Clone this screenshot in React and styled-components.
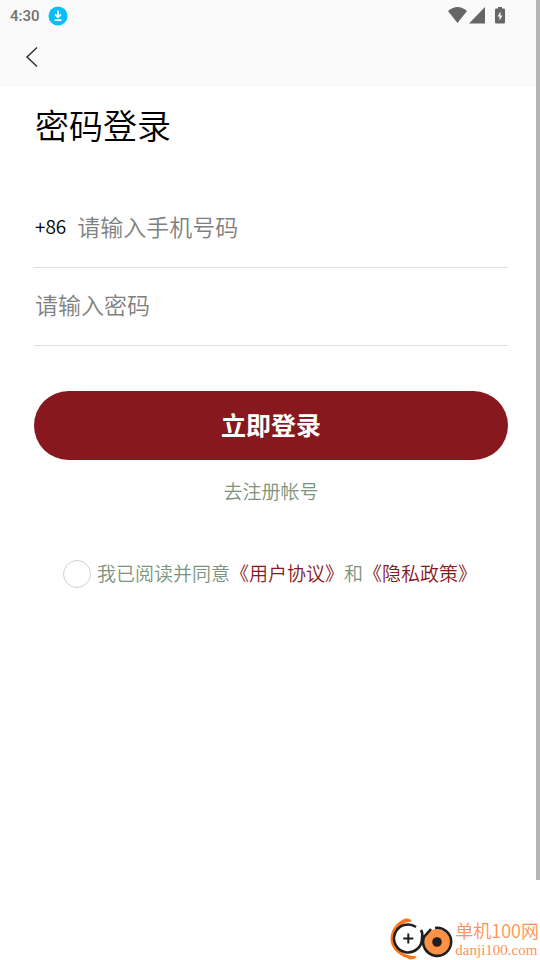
import React, { useState } from 'react';
import styled, { createGlobalStyle } from 'styled-components';

const GlobalStyle = createGlobalStyle`
  *, *::before, *::after { box-sizing: border-box; }
  body {
    margin: 0;
    background: #fff;
    font-family: "Noto Sans CJK SC", "Noto Sans", sans-serif;
    font-weight: 350;
    color: #000;
  }
`;

const Screen = styled.div`
  display: flex;
  flex-direction: column;
  min-height: 100vh;
`;

const Viewport = styled.div`
  flex: 1;
  border-right: 4px solid #b4b4b4;
`;

const Top = styled.header`
  background: #fafafa;
`;

const StatusBar = styled.div`
  display: flex;
  align-items: center;
  justify-content: space-between;
  height: 31px;
  padding: 0 31px 0 10px;
`;

const StatusGroup = styled.div`
  display: flex;
  align-items: center;
  gap: ${(p) => p.$gap}px;
`;

const Clock = styled.time`
  font: 500 15px/20px Roboto, sans-serif;
  color: #707070;
`;

const NavBar = styled.nav`
  height: 56px;
  padding: 10px 16px;
`;

const BackButton = styled.button`
  display: flex;
  align-items: center;
  justify-content: center;
  width: 32px;
  height: 32px;
  padding: 0;
  border: 0;
  background: none;
  cursor: pointer;
`;

const Form = styled.form`
  display: flex;
  flex-direction: column;
  padding: 13px 28px 0 34px;
`;

const Title = styled.h1`
  margin: 0 0 40px;
  padding-left: 1px;
  font-size: 34px;
  line-height: 50px;
  font-weight: 350;
`;

const Field = styled.label`
  display: flex;
  align-items: flex-start;
  gap: 11px;
  height: 78px;
  padding: 16px 0 0 1px;
  border-bottom: 1px solid #ddd;
`;

const Prefix = styled.span`
  font-size: 19px;
  line-height: 40px;
`;

const Input = styled.input`
  flex: 1;
  min-width: 0;
  height: 40px;
  padding: 0;
  border: 0;
  outline: 0;
  background: none;
  font: inherit;
  font-size: 23px;
  &::placeholder { color: #808080; opacity: 1; }
`;

const Submit = styled.button`
  height: 69px;
  margin-top: 45px;
  padding: 0 0 4px;
  border: 0;
  border-radius: 35px;
  background: #87181e;
  color: #fff;
  font: inherit;
  font-size: 25px;
  font-weight: 700;
  cursor: pointer;
`;

const RegisterLink = styled.a`
  align-self: center;
  margin-top: 17px;
  font-size: 19px;
  line-height: 28px;
  color: #7c937e;
  text-decoration: none;
`;

const Agreement = styled.div`
  display: flex;
  align-items: center;
  justify-content: center;
  gap: 6px;
  margin-top: 54px;
  padding-right: 2px;
  font-size: 19px;
  line-height: 28px;
  color: #7c937e;
`;

const AgreementText = styled.span`
  padding-bottom: 2px;
`;

const Check = styled.input`
  appearance: none;
  flex: none;
  width: 28px;
  height: 28px;
  margin: 0;
  border: 1px solid #d0d0d0;
  border-radius: 50%;
  background: #fff;
  &:checked { background: #87181e; }
`;

const PolicyLink = styled.a`
  color: #87181e;
  text-decoration: none;
`;

const Footer = styled.footer`
  display: flex;
  align-items: center;
  justify-content: flex-end;
  gap: 1px;
  height: 80px;
  padding: 38px 1px 0 0;
`;

const Brand = styled.div`
  display: flex;
  flex-direction: column;
  padding-bottom: 2px;
  color: #ff9350;
`;

const BrandName = styled.span`
  font-size: 18px;
  line-height: 24px;
`;

const BrandSite = styled.span`
  font: 400 15px/16px "Liberation Serif", serif;
`;

const Battery = styled.span`
  display: flex;
  margin-left: 8px;
`;

function DownloadIcon() {
  return (
    <svg width="20" height="20" viewBox="0 0 20 20" aria-hidden="true">
      <circle cx="10" cy="10" r="9.5" fill="#08bdfb" />
      <path d="M10 4.5v7M7 8.3l3 3 3-3M6.5 14.2h7" fill="none" stroke="#fff" strokeWidth="1.8" />
    </svg>
  );
}

function WifiIcon() {
  return (
    <svg width="20" height="18" viewBox="0 0 20 18" aria-hidden="true">
      <path d="M0 4Q9.500-4 19 4L9.500 16Z" fill="#666" />
    </svg>
  );
}

function SignalIcon() {
  return (
    <svg width="17" height="18" viewBox="0 0 17 18" aria-hidden="true">
      <path d="M0 16.500L16 0V16.500Z" fill="#666" />
    </svg>
  );
}

function BatteryIcon() {
  return (
    <svg width="10" height="18" viewBox="0 0 10 18" aria-hidden="true">
      <path d="M3 0h4v1.500h2l1 1v13l-1 1H1l-1-1V2.500l1-1h2Z" fill="#666" />
      <path d="M5.500 4.500L2.500 9.500H4.500V13.500L7.500 8.500H5.500Z" fill="#fff" />
    </svg>
  );
}

function BackIcon() {
  return (
    <svg width="14" height="22" viewBox="0 0 14 22" aria-hidden="true">
      <path d="M12 1.500L2 11L12 20.500" fill="none" stroke="#333" strokeWidth="1.500" />
    </svg>
  );
}

function BrandLogo() {
  return (
    <svg width="64" height="42" viewBox="0 0 64 42" aria-hidden="true">
      <path d="M22 3.500C20 0 16 0 13 1.500C5 6 .5 13 .5 21C.5 30 8 37 17 40C21 42.500 25 41 27 38.500C17 38 3 33 3 21C3 11 12 4 22 3.500Z" fill="#ff7418" />
      <circle cx="47" cy="24" r="13" fill="#ff9147" />
      <path d="M26 9A14 14 0 1 0 32 20Q33 15 31 12M45 10A14 14 0 1 1 34 19L41 11" fill="none" stroke="#211e20" strokeWidth="2.600" />
      <circle cx="47" cy="24" r="4.800" fill="#211e20" />
      <path d="M18.300 15.500v10M13.300 20.500h10" stroke="#211e20" strokeWidth="2" />
    </svg>
  );
}

export default function App() {
  const [phone, setPhone] = useState('');
  const [password, setPassword] = useState('');
  return (
    <Screen>
      <GlobalStyle />
      <Viewport>
        <Top>
          <StatusBar>
            <StatusGroup $gap={8}>
              <Clock>4:30</Clock>
              <DownloadIcon />
            </StatusGroup>
            <StatusGroup $gap={1}>
              <WifiIcon />
              <SignalIcon />
              <Battery><BatteryIcon /></Battery>
            </StatusGroup>
          </StatusBar>
          <NavBar>
            <BackButton type="button" aria-label="返回"><BackIcon /></BackButton>
          </NavBar>
        </Top>
        <Form onSubmit={(e) => e.preventDefault()}>
          <Title>密码登录</Title>
          <Field>
            <Prefix>+86</Prefix>
            <Input type="tel" aria-label="手机号码" placeholder="请输入手机号码" value={phone} onChange={(e) => setPhone(e.target.value)} />
          </Field>
          <Field>
            <Input type="password" aria-label="密码" placeholder="请输入密码" value={password} onChange={(e) => setPassword(e.target.value)} />
          </Field>
          <Submit type="submit">立即登录</Submit>
          <RegisterLink href="#register">去注册帐号</RegisterLink>
          <Agreement>
            <Check id="agree" type="checkbox" />
            <AgreementText>
              <label htmlFor="agree">我已阅读并同意</label>
              <PolicyLink href="#terms">《用户协议》</PolicyLink>
              和
              <PolicyLink href="#privacy">《隐私政策》</PolicyLink>
            </AgreementText>
          </Agreement>
        </Form>
      </Viewport>
      <Footer>
        <BrandLogo />
        <Brand>
          <BrandName>单机100网</BrandName>
          <BrandSite>danji100.com</BrandSite>
        </Brand>
      </Footer>
    </Screen>
  );
}
